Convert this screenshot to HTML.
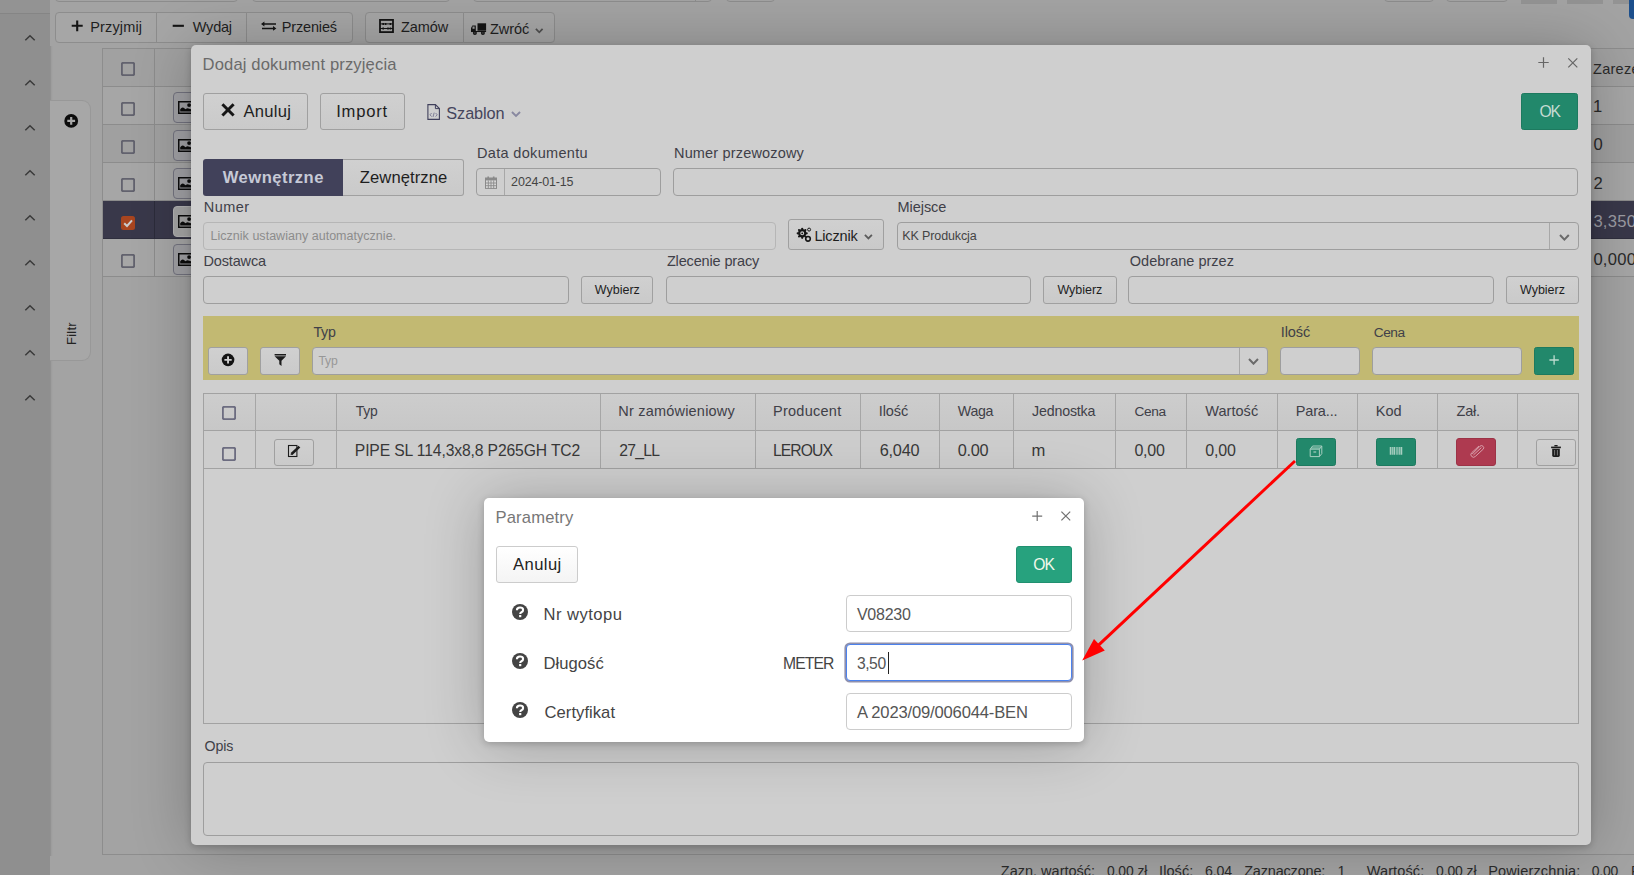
<!DOCTYPE html>
<html lang="pl"><head><meta charset="utf-8"><title>Dodaj dokument przyjęcia</title>
<style>
html,body{margin:0;padding:0}
body{width:1634px;height:875px;overflow:hidden;position:relative;background:#a3a3a3;font-family:"Liberation Sans",sans-serif}
#root{position:absolute;left:0;top:0;width:1634px;height:875px;overflow:hidden}
#root div,#root svg.a{position:absolute}
.t{position:absolute;white-space:nowrap;line-height:20px}
</style></head>
<body><div id="root">
<div style="left:0px;top:0px;width:50px;height:875px;background:#8f8f8f;"></div>
<div style="left:0px;top:0px;width:50px;height:13px;background:#939393;border-bottom:1px solid #858585;"></div>
<div style="left:49.5px;top:46px;width:1.0px;height:810px;background:rgba(0,0,0,.10);"></div>
<div style="left:50.5px;top:46px;width:2.5px;height:810px;background:linear-gradient(90deg,rgba(0,0,0,.05),rgba(0,0,0,0));"></div>
<svg class="a" style="left:24px;top:33.5px" width="12" height="8" viewBox="0 0 12 8"><path d="M1.3 6.3 L6 1.7 L10.7 6.3" fill="none" stroke="#3a3a3a" stroke-width="1.5"/></svg>
<svg class="a" style="left:24px;top:78.5px" width="12" height="8" viewBox="0 0 12 8"><path d="M1.3 6.3 L6 1.7 L10.7 6.3" fill="none" stroke="#3a3a3a" stroke-width="1.5"/></svg>
<svg class="a" style="left:24px;top:123.5px" width="12" height="8" viewBox="0 0 12 8"><path d="M1.3 6.3 L6 1.7 L10.7 6.3" fill="none" stroke="#3a3a3a" stroke-width="1.5"/></svg>
<svg class="a" style="left:24px;top:168.5px" width="12" height="8" viewBox="0 0 12 8"><path d="M1.3 6.3 L6 1.7 L10.7 6.3" fill="none" stroke="#3a3a3a" stroke-width="1.5"/></svg>
<svg class="a" style="left:24px;top:213.5px" width="12" height="8" viewBox="0 0 12 8"><path d="M1.3 6.3 L6 1.7 L10.7 6.3" fill="none" stroke="#3a3a3a" stroke-width="1.5"/></svg>
<svg class="a" style="left:24px;top:258.5px" width="12" height="8" viewBox="0 0 12 8"><path d="M1.3 6.3 L6 1.7 L10.7 6.3" fill="none" stroke="#3a3a3a" stroke-width="1.5"/></svg>
<svg class="a" style="left:24px;top:303.5px" width="12" height="8" viewBox="0 0 12 8"><path d="M1.3 6.3 L6 1.7 L10.7 6.3" fill="none" stroke="#3a3a3a" stroke-width="1.5"/></svg>
<svg class="a" style="left:24px;top:348.5px" width="12" height="8" viewBox="0 0 12 8"><path d="M1.3 6.3 L6 1.7 L10.7 6.3" fill="none" stroke="#3a3a3a" stroke-width="1.5"/></svg>
<svg class="a" style="left:24px;top:393.5px" width="12" height="8" viewBox="0 0 12 8"><path d="M1.3 6.3 L6 1.7 L10.7 6.3" fill="none" stroke="#3a3a3a" stroke-width="1.5"/></svg>
<div style="left:55px;top:-30px;width:183px;height:32px;border:1px solid #8c8c8c;border-radius:4px;box-sizing:border-box;"></div>
<div style="left:252px;top:-30px;width:198px;height:32px;border:1px solid #8c8c8c;border-radius:4px;box-sizing:border-box;"></div>
<div style="left:473px;top:-30px;width:239px;height:32px;border:1px solid #8c8c8c;border-radius:4px;box-sizing:border-box;"></div>
<div style="left:726px;top:-30px;width:49px;height:32px;border:1px solid #8c8c8c;border-radius:4px;box-sizing:border-box;"></div>
<div style="left:1384px;top:-30px;width:50px;height:32px;border:1px solid #8c8c8c;border-radius:4px;box-sizing:border-box;"></div>
<div style="left:1446px;top:-30px;width:62px;height:32px;border:1px solid #8c8c8c;border-radius:4px;box-sizing:border-box;"></div>
<div style="left:695px;top:-5px;width:1px;height:6px;background:#8c8c8c;"></div>
<div style="left:1521px;top:0px;width:36px;height:3.5px;background:#939393;"></div>
<div style="left:1567px;top:0px;width:36px;height:3.5px;background:#939393;"></div>
<div style="left:1613px;top:0px;width:21px;height:3.5px;background:#939393;"></div>
<div style="left:1629px;top:-5px;width:11px;height:23.5px;background:#1c4f8c;border-radius:0 0 0 4px;"></div>
<div style="left:55px;top:12px;width:102px;height:30.5px;background:#a6a6a6;border:1px solid #8d8d8d;border-radius:4px 0 0 4px;box-sizing:border-box;"></div>
<div style="left:156px;top:12px;width:91px;height:30.5px;background:#a6a6a6;border:1px solid #8d8d8d;border-radius:0;box-sizing:border-box;"></div>
<div style="left:246px;top:12px;width:106.5px;height:30.5px;background:#a6a6a6;border:1px solid #8d8d8d;border-radius:0 4px 4px 0;box-sizing:border-box;"></div>
<div style="left:365px;top:12px;width:99px;height:30.5px;background:#a6a6a6;border:1px solid #8d8d8d;border-radius:4px 0 0 4px;box-sizing:border-box;"></div>
<div style="left:463px;top:12px;width:91.5px;height:30.5px;background:#a6a6a6;border:1px solid #8d8d8d;border-radius:0 4px 4px 0;box-sizing:border-box;"></div>
<span class="t" style="left:90.30px;top:17px;line-height:20px;font-size:14.5px;letter-spacing:0.140px;color:#1f1f1f;">Przyjmij</span>
<span class="t" style="left:192.80px;top:17px;line-height:20px;font-size:14.5px;letter-spacing:-0.234px;color:#1f1f1f;">Wydaj</span>
<span class="t" style="left:281.80px;top:17px;line-height:20px;font-size:14.5px;letter-spacing:-0.166px;color:#1f1f1f;">Przenieś</span>
<span class="t" style="left:401.00px;top:17px;line-height:20px;font-size:14.5px;letter-spacing:-0.066px;color:#1f1f1f;">Zamów</span>
<span class="t" style="left:489.90px;top:19px;line-height:20px;font-size:14.5px;letter-spacing:-0.030px;color:#1f1f1f;">Zwróć</span>
<svg class="a" style="left:70px;top:19px" width="14" height="14" viewBox="0 0 14 14"><path d="M7.2 1.4 V12.2 M1.7 6.8 H12.7" stroke="#141414" stroke-width="2.1" fill="none"/></svg>
<svg class="a" style="left:171px;top:19px" width="14" height="14" viewBox="0 0 14 14"><path d="M1.7 6.8 H12.9" stroke="#141414" stroke-width="2.1" fill="none"/></svg>
<svg class="a" style="left:260px;top:19px" width="18" height="14" viewBox="0 0 18 14"><path d="M3 5 H16 M2 9.4 H14.6" stroke="#141414" stroke-width="1.5" fill="none"/><path d="M1 5 L4.4 2.6 V7.4 Z M16.4 9.4 L13 7 V11.8 Z" fill="#141414"/></svg>
<svg class="a" style="left:379px;top:19px" width="15" height="14" viewBox="0 0 15 14"><rect x="1" y="0.9" width="13" height="12.2" fill="none" stroke="#141414" stroke-width="1.8"/><path d="M1 4.9 H14 M1 9.5 H14" stroke="#141414" stroke-width="1"/><path d="M3.4 3.9 h1.6 v2 h-1.6z M5.8 3.9 h1.6 v2 h-1.6z M10.6 3.9 h1.6 v2 h-1.6z M3.4 8.5 h1.6 v2 h-1.6z M8.2 8.5 h1.6 v2 h-1.6z M10.6 8.5 h1.6 v2 h-1.6z" fill="#141414"/></svg>
<svg class="a" style="left:470px;top:22px" width="18" height="14" viewBox="0 0 18 14"><rect x="7.5" y="1.3" width="8.6" height="7.4" fill="#141414"/><path d="M1 9 V6 L2.4 3.6 H5.8 V9 Z" fill="#141414"/><rect x="2.5" y="4.5" width="2.1" height="2.3" fill="#9c9c9c"/><path d="M1 9.5 H16.1" stroke="#141414" stroke-width="1.1"/><circle cx="4.9" cy="10.9" r="2" fill="#141414"/><circle cx="12.9" cy="10.9" r="2" fill="#141414"/><circle cx="4.9" cy="10.9" r="0.7" fill="#666"/><circle cx="12.9" cy="10.9" r="0.7" fill="#666"/></svg>
<svg class="a" style="left:533.7px;top:26.6px" width="10.5" height="7.199999999999996" viewBox="0 0 10.5 7.199999999999996"><path d="M1.90 1.90 L5.25 5.30 L8.60 1.90" fill="none" stroke="#505050" stroke-width="1.8"/></svg>
<div style="left:50px;top:99.5px;width:40.5px;height:261.0px;background:#a7a7a7;border:1px solid #989898;border-left:none;border-radius:0 9px 9px 0;box-sizing:border-box;"></div>
<div class="a" style="left:62px;top:323px;width:20px;height:22px;"><span class="t" style="left:3px;top:22px;transform-origin:0 0;transform:rotate(-90deg);font-size:13px;letter-spacing:.25px;color:#222;line-height:14px">Filtr</span></div>
<svg class="a" style="left:63px;top:113px" width="16" height="16" viewBox="0 0 16 16"><circle cx="8.2" cy="7.9" r="6.9" fill="#0c0c0c"/><path d="M8.2 4 V11.8 M4.3 7.9 H12.1" stroke="#a7a7a7" stroke-width="2.2"/></svg>
<div style="left:102px;top:48px;width:1598px;height:807px;border:1px solid #8d8d8d;box-sizing:border-box;"></div>
<div style="left:103px;top:49px;width:1597px;height:38px;background:#a1a1a1;border-bottom:1px solid #8c8c8c;box-sizing:border-box;"></div>
<div style="left:103px;top:87px;width:1597px;height:37.5px;background:#a6a6a6;border-bottom:1px solid #8c8c8c;box-sizing:border-box;"></div>
<div style="left:103px;top:124.5px;width:1597px;height:38.0px;background:#a0a0a0;border-bottom:1px solid #8c8c8c;box-sizing:border-box;"></div>
<div style="left:103px;top:162.5px;width:1597px;height:38.5px;background:#a6a6a6;border-bottom:1px solid #8c8c8c;box-sizing:border-box;"></div>
<div style="left:103px;top:201px;width:1597px;height:38px;background:#39384a;border-bottom:1px solid #2f2f3e;box-sizing:border-box;"></div>
<div style="left:103px;top:239px;width:1597px;height:37.5px;background:#a6a6a6;border-bottom:1px solid #8c8c8c;box-sizing:border-box;"></div>
<div style="left:154px;top:49px;width:1px;height:227.5px;background:#8c8c8c;"></div>
<div style="left:154px;top:201px;width:1px;height:38px;background:#2c2c3a;"></div>
<svg class="a" style="left:121px;top:62px" width="14" height="14" viewBox="0 0 14 14"><rect x="0.8" y="0.8" width="12.4" height="12.4" rx="1.8" fill="none" stroke="#62626e" stroke-width="2"/></svg>
<svg class="a" style="left:121px;top:102px" width="14" height="14" viewBox="0 0 14 14"><rect x="0.8" y="0.8" width="12.4" height="12.4" rx="1.8" fill="none" stroke="#62626e" stroke-width="2"/></svg>
<svg class="a" style="left:121px;top:140px" width="14" height="14" viewBox="0 0 14 14"><rect x="0.8" y="0.8" width="12.4" height="12.4" rx="1.8" fill="none" stroke="#62626e" stroke-width="2"/></svg>
<svg class="a" style="left:121px;top:178px" width="14" height="14" viewBox="0 0 14 14"><rect x="0.8" y="0.8" width="12.4" height="12.4" rx="1.8" fill="none" stroke="#62626e" stroke-width="2"/></svg>
<svg class="a" style="left:121px;top:254px" width="14" height="14" viewBox="0 0 14 14"><rect x="0.8" y="0.8" width="12.4" height="12.4" rx="1.8" fill="none" stroke="#62626e" stroke-width="2"/></svg>
<div style="left:121px;top:216px;width:14px;height:14px;background:#a8451f;border-radius:2.5px;"></div>
<svg class="a" style="left:121px;top:216px" width="14" height="14" viewBox="0 0 14 14"><path d="M3.2 7.2 L6 10 L11 4.4" fill="none" stroke="#cbcbcb" stroke-width="2"/></svg>
<div style="left:173px;top:92px;width:42px;height:31px;background:#a1a1a5;border:1px solid #73737f;border-radius:4px;box-sizing:border-box;"></div>
<svg class="a" style="left:178px;top:101px" width="16" height="13" viewBox="0 0 16 13"><rect x="0.75" y="0.75" width="14.5" height="11.5" fill="none" stroke="#0c0c0c" stroke-width="1.5"/><circle cx="11.1" cy="4.1" r="1.9" fill="#0c0c0c"/><path d="M2.2 10.6 L2.2 8.2 Q4.4 5 6.6 7.6 L7.6 8.2 Q9 7 10.4 7.4 L13.8 8.6 L13.8 10.6 Z" fill="#0c0c0c"/></svg>
<div style="left:173px;top:130px;width:42px;height:31px;background:#a1a1a5;border:1px solid #73737f;border-radius:4px;box-sizing:border-box;"></div>
<svg class="a" style="left:178px;top:139px" width="16" height="13" viewBox="0 0 16 13"><rect x="0.75" y="0.75" width="14.5" height="11.5" fill="none" stroke="#0c0c0c" stroke-width="1.5"/><circle cx="11.1" cy="4.1" r="1.9" fill="#0c0c0c"/><path d="M2.2 10.6 L2.2 8.2 Q4.4 5 6.6 7.6 L7.6 8.2 Q9 7 10.4 7.4 L13.8 8.6 L13.8 10.6 Z" fill="#0c0c0c"/></svg>
<div style="left:173px;top:168px;width:42px;height:31px;background:#a1a1a5;border:1px solid #73737f;border-radius:4px;box-sizing:border-box;"></div>
<svg class="a" style="left:178px;top:177px" width="16" height="13" viewBox="0 0 16 13"><rect x="0.75" y="0.75" width="14.5" height="11.5" fill="none" stroke="#0c0c0c" stroke-width="1.5"/><circle cx="11.1" cy="4.1" r="1.9" fill="#0c0c0c"/><path d="M2.2 10.6 L2.2 8.2 Q4.4 5 6.6 7.6 L7.6 8.2 Q9 7 10.4 7.4 L13.8 8.6 L13.8 10.6 Z" fill="#0c0c0c"/></svg>
<div style="left:173px;top:206px;width:42px;height:31px;background:#a6a6a6;border:1px solid #b4b4b4;border-radius:4px;box-sizing:border-box;"></div>
<svg class="a" style="left:178px;top:215px" width="16" height="13" viewBox="0 0 16 13"><rect x="0.75" y="0.75" width="14.5" height="11.5" fill="none" stroke="#0c0c0c" stroke-width="1.5"/><circle cx="11.1" cy="4.1" r="1.9" fill="#0c0c0c"/><path d="M2.2 10.6 L2.2 8.2 Q4.4 5 6.6 7.6 L7.6 8.2 Q9 7 10.4 7.4 L13.8 8.6 L13.8 10.6 Z" fill="#0c0c0c"/></svg>
<div style="left:173px;top:244px;width:42px;height:31px;background:#a1a1a5;border:1px solid #73737f;border-radius:4px;box-sizing:border-box;"></div>
<svg class="a" style="left:178px;top:253px" width="16" height="13" viewBox="0 0 16 13"><rect x="0.75" y="0.75" width="14.5" height="11.5" fill="none" stroke="#0c0c0c" stroke-width="1.5"/><circle cx="11.1" cy="4.1" r="1.9" fill="#0c0c0c"/><path d="M2.2 10.6 L2.2 8.2 Q4.4 5 6.6 7.6 L7.6 8.2 Q9 7 10.4 7.4 L13.8 8.6 L13.8 10.6 Z" fill="#0c0c0c"/></svg>
<span class="t" style="left:1593.10px;top:59px;line-height:20px;font-size:14.5px;letter-spacing:0.250px;color:#2a2a2a;">Zareze</span>
<span class="t" style="left:1593.00px;top:95px;line-height:23px;font-size:16.6px;letter-spacing:0.250px;color:#2a2a2a;">1</span>
<span class="t" style="left:1593.40px;top:133px;line-height:23px;font-size:16.6px;letter-spacing:0.250px;color:#2a2a2a;">0</span>
<span class="t" style="left:1593.40px;top:172px;line-height:23px;font-size:16.6px;letter-spacing:0.250px;color:#2a2a2a;">2</span>
<span class="t" style="left:1593.40px;top:210px;line-height:23px;font-size:16.6px;letter-spacing:0.250px;color:#9c9ca4;">3,350</span>
<span class="t" style="left:1593.40px;top:248px;line-height:23px;font-size:16.6px;letter-spacing:0.250px;color:#2a2a2a;">0,000</span>
<span class="t" style="left:1000.80px;top:861px;line-height:20px;font-size:14.5px;letter-spacing:0.004px;color:#2b2b2b;">Zazn. wartość:</span>
<span class="t" style="left:1106.90px;top:861px;line-height:20px;font-size:13.9px;letter-spacing:-0.073px;color:#2b2b2b;">0,00 zł</span>
<span class="t" style="left:1159.10px;top:861px;line-height:20px;font-size:14.5px;letter-spacing:0.057px;color:#2b2b2b;">Ilość:</span>
<span class="t" style="left:1205.00px;top:861px;line-height:20px;font-size:14.2px;letter-spacing:-0.174px;color:#2b2b2b;">6,04</span>
<span class="t" style="left:1244.20px;top:861px;line-height:20px;font-size:14.5px;letter-spacing:-0.189px;color:#2b2b2b;">Zaznaczone:</span>
<span class="t" style="left:1337.50px;top:861px;line-height:20px;font-size:14.5px;letter-spacing:0.250px;color:#2b2b2b;">1</span>
<span class="t" style="left:1366.70px;top:861px;line-height:20px;font-size:14.5px;letter-spacing:0.124px;color:#2b2b2b;">Wartość:</span>
<span class="t" style="left:1436.00px;top:861px;line-height:20px;font-size:13.9px;letter-spacing:-0.073px;color:#2b2b2b;">0,00 zł</span>
<span class="t" style="left:1488.20px;top:861px;line-height:20px;font-size:14.5px;letter-spacing:0.155px;color:#2b2b2b;">Powierzchnia:</span>
<span class="t" style="left:1591.70px;top:861px;line-height:20px;font-size:13.9px;letter-spacing:-0.170px;color:#2b2b2b;">0,00</span>
<span class="t" style="left:1631.00px;top:861px;line-height:20px;font-size:14.5px;letter-spacing:0.250px;color:#2b2b2b;">P</span>
<div style="left:191px;top:45px;width:1400px;height:800px;background:#cfcfcf;border-radius:5px;box-shadow:0 2px 7px rgba(0,0,0,.2),0 2px 60px rgba(0,0,0,.24);"></div>
<span class="t" style="left:202.60px;top:53px;line-height:23px;font-size:16.6px;letter-spacing:0.126px;color:#6a6a6a;">Dodaj dokument przyjęcia</span>
<div style="left:203px;top:93px;width:105px;height:37px;background:linear-gradient(#d0d0d0,#cacaca);border:1px solid #a0a0a0;border-radius:3px;box-sizing:border-box;"></div>
<div style="left:320px;top:93px;width:85px;height:37px;background:linear-gradient(#d0d0d0,#cacaca);border:1px solid #a0a0a0;border-radius:3px;box-sizing:border-box;"></div>
<span class="t" style="left:243.40px;top:100px;line-height:23px;font-size:16.6px;letter-spacing:0.292px;color:#1e1e1e;">Anuluj</span>
<span class="t" style="left:336.20px;top:100px;line-height:23px;font-size:16.6px;letter-spacing:0.777px;color:#1e1e1e;">Import</span>
<span class="t" style="left:446.30px;top:102px;line-height:22px;font-size:16.3px;letter-spacing:-0.080px;color:#45455c;">Szablon</span>
<div style="left:1521px;top:93px;width:57px;height:37px;background:#22886b;border:1px solid #1d7a5f;border-radius:2.5px;box-sizing:border-box;"></div>
<span class="t" style="left:1539.40px;top:101px;line-height:21px;font-size:15.7px;letter-spacing:-1.000px;color:#c4dbd2;">OK</span>
<div style="left:203px;top:159px;width:140px;height:37px;background:#41415a;border-radius:3px 0 0 3px;"></div>
<div style="left:343px;top:159px;width:121px;height:37px;background:linear-gradient(#d0d0d0,#cacaca);border:1px solid #a0a0a0;border-left:none;border-radius:0 3px 3px 0;box-sizing:border-box;"></div>
<span class="t" style="left:222.80px;top:166px;line-height:23px;font-size:16.6px;letter-spacing:0.458px;color:#c6c9d6;font-weight:bold;">Wewnętrzne</span>
<span class="t" style="left:359.80px;top:166px;line-height:23px;font-size:16.6px;letter-spacing:0.081px;color:#1e1e1e;">Zewnętrzne</span>
<span class="t" style="left:477.00px;top:143px;line-height:20px;font-size:14.5px;letter-spacing:0.328px;color:#404048;">Data dokumentu</span>
<div style="left:476px;top:168px;width:185px;height:28px;background:#cfcfcf;border:1px solid #9e9e9e;border-radius:4px;box-sizing:border-box;"></div>
<div style="left:504px;top:169px;width:1px;height:26px;background:#a8a8a8;"></div>
<span class="t" style="left:511.10px;top:173px;line-height:18px;font-size:12.5px;letter-spacing:-0.165px;color:#444;">2024-01-15</span>
<span class="t" style="left:674.00px;top:143px;line-height:20px;font-size:14.5px;letter-spacing:0.169px;color:#404048;">Numer przewozowy</span>
<div style="left:673px;top:168px;width:905px;height:28px;background:#cfcfcf;border:1px solid #9e9e9e;border-radius:4px;box-sizing:border-box;"></div>
<span class="t" style="left:203.70px;top:197px;line-height:20px;font-size:14.5px;letter-spacing:0.480px;color:#404048;">Numer</span>
<div style="left:203px;top:222px;width:573px;height:28px;background:#d0d0d0;border:1px solid #b6b6b6;border-radius:4px;box-sizing:border-box;"></div>
<span class="t" style="left:210.50px;top:227px;line-height:18px;font-size:12.5px;letter-spacing:0.025px;color:#8c8c8c;">Licznik ustawiany automatycznie.</span>
<div style="left:788px;top:219px;width:96px;height:31px;background:linear-gradient(#d0d0d0,#cacaca);border:1px solid #a0a0a0;border-radius:3px;box-sizing:border-box;"></div>
<span class="t" style="left:814.40px;top:226px;line-height:20px;font-size:14.5px;letter-spacing:-0.162px;color:#1e1e1e;">Licznik</span>
<span class="t" style="left:897.60px;top:197px;line-height:20px;font-size:14.5px;letter-spacing:-0.064px;color:#404048;">Miejsce</span>
<div style="left:897px;top:222px;width:682px;height:28px;background:#cfcfcf;border:1px solid #9e9e9e;border-radius:4px;box-sizing:border-box;"></div>
<div style="left:1549px;top:223px;width:1px;height:26px;background:#a8a8a8;"></div>
<span class="t" style="left:902.30px;top:227px;line-height:18px;font-size:12.5px;letter-spacing:-0.126px;color:#444;">KK Produkcja</span>
<span class="t" style="left:203.50px;top:251px;line-height:20px;font-size:14.5px;letter-spacing:-0.157px;color:#404048;">Dostawca</span>
<div style="left:203px;top:276px;width:366px;height:28px;background:#cfcfcf;border:1px solid #9e9e9e;border-radius:4px;box-sizing:border-box;"></div>
<span class="t" style="left:666.90px;top:251px;line-height:20px;font-size:14.5px;letter-spacing:-0.149px;color:#404048;">Zlecenie pracy</span>
<div style="left:666px;top:276px;width:365px;height:28px;background:#cfcfcf;border:1px solid #9e9e9e;border-radius:4px;box-sizing:border-box;"></div>
<span class="t" style="left:1129.80px;top:251px;line-height:20px;font-size:14.5px;letter-spacing:0.013px;color:#404048;">Odebrane przez</span>
<div style="left:1128px;top:276px;width:366px;height:28px;background:#cfcfcf;border:1px solid #9e9e9e;border-radius:4px;box-sizing:border-box;"></div>
<div style="left:581px;top:276px;width:72px;height:28px;background:linear-gradient(#d0d0d0,#cacaca);border:1px solid #a0a0a0;border-radius:3px;box-sizing:border-box;"></div>
<span class="t" style="left:594.85px;top:281px;line-height:18px;font-size:12.5px;letter-spacing:-0.014px;color:#1e1e1e;">Wybierz</span>
<div style="left:1043px;top:276px;width:73.5px;height:28px;background:linear-gradient(#d0d0d0,#cacaca);border:1px solid #a0a0a0;border-radius:3px;box-sizing:border-box;"></div>
<span class="t" style="left:1057.40px;top:281px;line-height:18px;font-size:12.5px;letter-spacing:-0.014px;color:#1e1e1e;">Wybierz</span>
<div style="left:1506px;top:276px;width:73px;height:28px;background:linear-gradient(#d0d0d0,#cacaca);border:1px solid #a0a0a0;border-radius:3px;box-sizing:border-box;"></div>
<span class="t" style="left:1520.00px;top:281px;line-height:18px;font-size:12.5px;letter-spacing:-0.014px;color:#1e1e1e;">Wybierz</span>
<div style="left:203px;top:316px;width:1376px;height:64px;background:#c2b972;"></div>
<span class="t" style="left:313.40px;top:322px;line-height:20px;font-size:14.2px;letter-spacing:-0.188px;color:#404048;">Typ</span>
<span class="t" style="left:1280.70px;top:322px;line-height:20px;font-size:14.5px;letter-spacing:-0.066px;color:#404048;">Ilość</span>
<span class="t" style="left:1373.80px;top:323px;line-height:19px;font-size:13.7px;letter-spacing:-0.470px;color:#404048;">Cena</span>
<div style="left:208px;top:347px;width:40px;height:27.5px;background:linear-gradient(#d0d0d0,#cacaca);border:1px solid #a0a0a0;border-radius:3px;box-sizing:border-box;"></div>
<div style="left:260px;top:347px;width:40px;height:27.5px;background:linear-gradient(#d0d0d0,#cacaca);border:1px solid #a0a0a0;border-radius:3px;box-sizing:border-box;"></div>
<div style="left:312px;top:347px;width:956px;height:27.5px;background:#cfcfcf;border:1px solid #9e9e9e;border-radius:4px;box-sizing:border-box;"></div>
<div style="left:1239px;top:348px;width:1px;height:25.5px;background:#a8a8a8;"></div>
<span class="t" style="left:318.40px;top:352px;line-height:18px;font-size:12.2px;letter-spacing:-0.183px;color:#979797;">Typ</span>
<div style="left:1280px;top:347px;width:80px;height:27.5px;background:#cfcfcf;border:1px solid #9e9e9e;border-radius:4px;box-sizing:border-box;"></div>
<div style="left:1372px;top:347px;width:150px;height:27.5px;background:#cfcfcf;border:1px solid #9e9e9e;border-radius:4px;box-sizing:border-box;"></div>
<div style="left:1534px;top:347px;width:40px;height:28px;background:#22886b;border:1px solid #1d7a5f;border-radius:2.5px;box-sizing:border-box;"></div>
<div style="left:203px;top:392.5px;width:1376px;height:331.0px;border:1px solid #a2a2a2;box-sizing:border-box;"></div>
<div style="left:204px;top:393.5px;width:1374px;height:37.0px;background:linear-gradient(#cdcdcd,#c7c7c7);border-bottom:1px solid #a2a2a2;box-sizing:border-box;"></div>
<div style="left:204px;top:430.5px;width:1374px;height:38.0px;background:#cdcdcd;border-bottom:1px solid #a2a2a2;box-sizing:border-box;"></div>
<div style="left:255.0px;top:393.5px;width:1.0px;height:74.5px;background:#a6a6a6;"></div>
<div style="left:336.0px;top:393.5px;width:1.0px;height:74.5px;background:#a6a6a6;"></div>
<div style="left:600.0px;top:393.5px;width:1.0px;height:74.5px;background:#a6a6a6;"></div>
<div style="left:755.0px;top:393.5px;width:1.0px;height:74.5px;background:#a6a6a6;"></div>
<div style="left:860.0px;top:393.5px;width:1.0px;height:74.5px;background:#a6a6a6;"></div>
<div style="left:939.0px;top:393.5px;width:1.0px;height:74.5px;background:#a6a6a6;"></div>
<div style="left:1013.0px;top:393.5px;width:1.0px;height:74.5px;background:#a6a6a6;"></div>
<div style="left:1115.0px;top:393.5px;width:1.0px;height:74.5px;background:#a6a6a6;"></div>
<div style="left:1186.0px;top:393.5px;width:1.0px;height:74.5px;background:#a6a6a6;"></div>
<div style="left:1277.0px;top:393.5px;width:1.0px;height:74.5px;background:#a6a6a6;"></div>
<div style="left:1357.0px;top:393.5px;width:1.0px;height:74.5px;background:#a6a6a6;"></div>
<div style="left:1437.0px;top:393.5px;width:1.0px;height:74.5px;background:#a6a6a6;"></div>
<div style="left:1517.0px;top:393.5px;width:1.0px;height:74.5px;background:#a6a6a6;"></div>
<svg class="a" style="left:222px;top:406px" width="14" height="14" viewBox="0 0 14 14"><rect x="0.8" y="0.8" width="12.4" height="12.4" rx="1.8" fill="none" stroke="#6c6c80" stroke-width="2"/></svg>
<svg class="a" style="left:222px;top:446.5px" width="14" height="14" viewBox="0 0 14 14"><rect x="0.8" y="0.8" width="12.4" height="12.4" rx="1.8" fill="none" stroke="#6c6c80" stroke-width="2"/></svg>
<div style="left:274px;top:438.5px;width:40px;height:27.0px;background:linear-gradient(#d0d0d0,#cacaca);border:1px solid #a0a0a0;border-radius:3px;box-sizing:border-box;"></div>
<span class="t" style="left:355.80px;top:401px;line-height:20px;font-size:13.9px;letter-spacing:-0.232px;color:#404048;">Typ</span>
<span class="t" style="left:618.30px;top:401px;line-height:20px;font-size:14.5px;letter-spacing:0.203px;color:#404048;">Nr zamówieniowy</span>
<span class="t" style="left:773.00px;top:401px;line-height:20px;font-size:14.5px;letter-spacing:0.266px;color:#404048;">Producent</span>
<span class="t" style="left:878.70px;top:401px;line-height:20px;font-size:14.5px;letter-spacing:-0.066px;color:#404048;">Ilość</span>
<span class="t" style="left:957.80px;top:401px;line-height:20px;font-size:14.2px;letter-spacing:-0.282px;color:#404048;">Waga</span>
<span class="t" style="left:1032.10px;top:401px;line-height:20px;font-size:14.2px;letter-spacing:-0.173px;color:#404048;">Jednostka</span>
<span class="t" style="left:1134.40px;top:402px;line-height:19px;font-size:13.7px;letter-spacing:-0.370px;color:#404048;">Cena</span>
<span class="t" style="left:1205.30px;top:401px;line-height:20px;font-size:14.5px;letter-spacing:0.036px;color:#404048;">Wartość</span>
<span class="t" style="left:1295.80px;top:401px;line-height:20px;font-size:14.5px;letter-spacing:-0.164px;color:#404048;">Para...</span>
<span class="t" style="left:1375.80px;top:401px;line-height:20px;font-size:14.5px;letter-spacing:-0.018px;color:#404048;">Kod</span>
<span class="t" style="left:1456.50px;top:401px;line-height:20px;font-size:14.5px;letter-spacing:-0.181px;color:#404048;">Zał.</span>
<span class="t" style="left:354.80px;top:440px;line-height:21px;font-size:15.7px;letter-spacing:-0.133px;color:#383838;">PIPE SL 114,3x8,8 P265GH TC2</span>
<span class="t" style="left:619.30px;top:440px;line-height:21px;font-size:15.7px;letter-spacing:-0.725px;color:#383838;">27_LL</span>
<span class="t" style="left:773.00px;top:440px;line-height:21px;font-size:15.7px;letter-spacing:-0.910px;color:#383838;">LEROUX</span>
<span class="t" style="left:879.70px;top:439px;line-height:22px;font-size:16.3px;letter-spacing:-0.197px;color:#383838;">6,040</span>
<span class="t" style="left:957.80px;top:439px;line-height:22px;font-size:16.3px;letter-spacing:-0.278px;color:#383838;">0.00</span>
<span class="t" style="left:1031.50px;top:439px;line-height:23px;font-size:16.6px;letter-spacing:0.250px;color:#383838;">m</span>
<span class="t" style="left:1134.40px;top:440px;line-height:21px;font-size:16.0px;letter-spacing:-0.214px;color:#383838;">0,00</span>
<span class="t" style="left:1205.30px;top:440px;line-height:21px;font-size:16.0px;letter-spacing:-0.214px;color:#383838;">0,00</span>
<div style="left:1296px;top:438px;width:40px;height:28px;background:#22886b;border:1px solid #1d7a5f;border-radius:2.5px;box-sizing:border-box;"></div>
<div style="left:1376px;top:438px;width:40px;height:28px;background:#22886b;border:1px solid #1d7a5f;border-radius:2.5px;box-sizing:border-box;"></div>
<div style="left:1456px;top:438px;width:40px;height:28px;background:#ae3a50;border:1px solid #9c3347;border-radius:3px;box-sizing:border-box;"></div>
<div style="left:1536px;top:438.5px;width:40px;height:27.0px;background:linear-gradient(#d0d0d0,#cacaca);border:1px solid #a0a0a0;border-radius:3px;box-sizing:border-box;"></div>
<span class="t" style="left:204.60px;top:736px;line-height:20px;font-size:14.2px;letter-spacing:-0.159px;color:#404048;">Opis</span>
<div style="left:203px;top:762px;width:1376px;height:74px;background:#cfcfcf;border:1px solid #9e9e9e;border-radius:4px;box-sizing:border-box;"></div>
<svg class="a" style="left:1537px;top:56px" width="13" height="13" viewBox="0 0 13 13"><path d="M6.5 1.3 V11.7 M1.3 6.5 H11.7" stroke="#666" stroke-width="1.2"/></svg>
<svg class="a" style="left:1567px;top:57px" width="12" height="12" viewBox="0 0 12 12"><path d="M1.3 1.3 L10.3 10.3 M10.3 1.3 L1.3 10.3" stroke="#666" stroke-width="1.2"/></svg>
<svg class="a" style="left:220px;top:102px" width="16" height="16" viewBox="0 0 16 16"><path d="M2.4 2.3 L13.6 13.5 M13.6 2.3 L2.4 13.5" stroke="#161616" stroke-width="3"/></svg>
<svg class="a" style="left:427px;top:104px" width="14" height="17" viewBox="0 0 14 17"><path d="M0.9 0.6 H8.4 L12.4 4.6 V15.4 H0.9 Z" fill="none" stroke="#40405c" stroke-width="1.1"/><path d="M8.4 0.6 V4.6 H12.4" fill="none" stroke="#40405c" stroke-width="1"/><path d="M4.6 9 L3 10.8 L4.6 12.6 M8.6 9 L10.2 10.8 L8.6 12.6 M7.2 8.6 L6 13" fill="none" stroke="#6a6a88" stroke-width="0.8"/></svg>
<svg class="a" style="left:509.6px;top:110.2px" width="12.0" height="7.799999999999997" viewBox="0 0 12.0 7.799999999999997"><path d="M1.95 1.95 L6.00 5.85 L10.05 1.95" fill="none" stroke="#8888a0" stroke-width="1.9"/></svg>
<svg class="a" style="left:485px;top:175.5px" width="12" height="13" viewBox="0 0 12 13"><rect x="0.5" y="2" width="11" height="10.4" fill="#d8d8d8" stroke="#8a8a8a" stroke-width="1"/><rect x="0.5" y="2" width="11" height="2.4" fill="#8a8a8a"/><path d="M3.3 4.4 V12.4 M6 4.4 V12.4 M8.7 4.4 V12.4 M0.5 7 H11.5 M0.5 9.7 H11.5" stroke="#8a8a8a" stroke-width="0.9"/><path d="M3.2 0.6 V3 M8.7 0.6 V3" stroke="#8a8a8a" stroke-width="1.6"/></svg>
<svg class="a" style="left:796px;top:226px" width="16" height="17" viewBox="0 0 16 17"><circle cx="6.2" cy="7.3" r="3.1" fill="none" stroke="#161616" stroke-width="2.2"/><circle cx="10.70" cy="7.30" r="1.1" fill="#161616"/><circle cx="9.38" cy="10.48" r="1.1" fill="#161616"/><circle cx="6.20" cy="11.80" r="1.1" fill="#161616"/><circle cx="3.02" cy="10.48" r="1.1" fill="#161616"/><circle cx="1.70" cy="7.30" r="1.1" fill="#161616"/><circle cx="3.02" cy="4.12" r="1.1" fill="#161616"/><circle cx="6.20" cy="2.80" r="1.1" fill="#161616"/><circle cx="9.38" cy="4.12" r="1.1" fill="#161616"/><circle cx="6.2" cy="7.3" r="0.9" fill="#161616"/><circle cx="13.1" cy="3.6" r="1.5" fill="none" stroke="#161616" stroke-width="1"/><circle cx="12" cy="12.8" r="2.3" fill="none" stroke="#161616" stroke-width="1.6"/></svg>
<svg class="a" style="left:863px;top:232.6px" width="10.799999999999955" height="7.400000000000006" viewBox="0 0 10.799999999999955 7.400000000000006"><path d="M1.90 1.90 L5.40 5.50 L8.90 1.90" fill="none" stroke="#5c5c5c" stroke-width="1.8"/></svg>
<svg class="a" style="left:1557.8px;top:233px" width="12.799999999999955" height="8.599999999999994" viewBox="0 0 12.799999999999955 8.599999999999994"><path d="M2.00 2.00 L6.40 6.60 L10.80 2.00" fill="none" stroke="#6a6a6a" stroke-width="2"/></svg>
<svg class="a" style="left:1246.5px;top:356.5px" width="13.0" height="8.699999999999989" viewBox="0 0 13.0 8.699999999999989"><path d="M2.00 2.00 L6.50 6.70 L11.00 2.00" fill="none" stroke="#6a6a6a" stroke-width="2"/></svg>
<svg class="a" style="left:220px;top:352px" width="16" height="16" viewBox="0 0 16 16"><circle cx="8.05" cy="7.85" r="6.3" fill="#141414"/><path d="M8.05 4.2 V11.5 M4.4 7.85 H11.7" stroke="#cfcfcf" stroke-width="1.9"/></svg>
<svg class="a" style="left:274px;top:353px" width="13" height="14" viewBox="0 0 13 14"><rect x="0.6" y="1" width="11.4" height="1.5" fill="#1c1c1c"/><path d="M0.6 3.3 H12 L7.5 7.8 V12.9 L5.3 11.2 V7.8 Z" fill="#1c1c1c"/></svg>
<svg class="a" style="left:1548px;top:354px" width="12" height="12" viewBox="0 0 12 12"><path d="M6.1 1.3 V10.7 M1.4 6 H10.8" stroke="#bfdcd0" stroke-width="1.3"/></svg>
<svg class="a" style="left:287px;top:444px" width="15" height="14" viewBox="0 0 15 14"><rect x="1.5" y="1.5" width="8.4" height="11" fill="none" stroke="#1c1c1c" stroke-width="1.1"/><path d="M12.4 2.6 L4.6 10" stroke="#1c1c1c" stroke-width="2.6"/><path d="M3.6 11 L4 9 L5.8 10.6 Z" fill="#1c1c1c"/></svg>
<svg class="a" style="left:1309px;top:444px" width="15" height="14" viewBox="0 0 15 14"><path d="M1.2 5.2 H10.4 V12.6 H1.2 Z M1.2 5.2 L3.6 2 H12.8 L10.4 5.2 M12.8 2 V9.6 L10.4 12.6 M2.2 4 H11.2" fill="none" stroke="#a8cfc1" stroke-width="1"/><path d="M4.4 8 H7.2" stroke="#a8cfc1" stroke-width="1.2"/></svg>
<svg class="a" style="left:1389px;top:446px" width="15" height="10" viewBox="0 0 15 10"><path d="M1.4 1 V8.8 M3.2 1 V8.8 M5.6 1 V8.8 M8 1 V8.8 M10.2 1 V8.8 M12.6 1 V8.8" stroke="#a8cfc1" stroke-width="1.3"/><path d="M4.4 1 V8.8 M11.4 1 V8.8" stroke="#a8cfc1" stroke-width="0.6"/></svg>
<svg class="a" style="left:1469px;top:443px" width="16" height="15" viewBox="0 0 16 15"><path d="M3 11.2 L11 3.2 A2.2 2.2 0 0 1 14.2 6.2 L6.4 13.4 A2.6 2.6 0 0 1 2.6 9.8 L10 3" fill="none" stroke="#dcaab4" stroke-width="0.9"/><path d="M4.4 12 L12.4 4.6" stroke="#dcaab4" stroke-width="0.9"/></svg>
<svg class="a" style="left:1550px;top:444px" width="12" height="14" viewBox="0 0 12 14"><path d="M4.4 1 H7.6 V2.4 H4.4 Z" fill="#1c1c1c"/><path d="M1.1 2.6 H10.9 V4.2 H1.1 Z" fill="#1c1c1c"/><path d="M2.2 4.8 H9.8 V11.6 Q9.8 13 8.4 13 H3.6 Q2.2 13 2.2 11.6 Z" fill="#1c1c1c"/><path d="M4.6 6 V11.4 M7.4 6 V11.4" stroke="#777" stroke-width="1"/></svg>
<div style="left:484px;top:497.5px;width:600px;height:244.0px;background:#fff;border-radius:5px;box-shadow:0 2px 7px rgba(0,0,0,.2),0 2px 60px rgba(0,0,0,.24);"></div>
<span class="t" style="left:495.50px;top:506px;line-height:23px;font-size:16.6px;letter-spacing:0.158px;color:#777;">Parametry</span>
<div style="left:496px;top:546px;width:82px;height:37px;background:linear-gradient(#fff,#f4f4f4);border:1px solid #ccc;border-radius:3px;box-sizing:border-box;"></div>
<span class="t" style="left:513.00px;top:553px;line-height:23px;font-size:16.6px;letter-spacing:0.432px;color:#222;">Anuluj</span>
<div style="left:1016px;top:546px;width:56px;height:37px;background:#27a27e;border:1px solid #219070;border-radius:3px;box-sizing:border-box;"></div>
<span class="t" style="left:1033.30px;top:554px;line-height:21px;font-size:15.7px;letter-spacing:-1.000px;color:#f1f8ea;">OK</span>
<div style="left:846px;top:595px;width:226px;height:37px;background:#fff;border:1px solid #ccc;border-radius:4px;box-sizing:border-box;"></div>
<div style="left:846px;top:644px;width:226px;height:37px;background:#fff;border:1px solid #4b82ee;border-radius:4px;box-sizing:border-box;box-shadow:0 0 0 1.6px #8f90ad;"></div>
<div style="left:846px;top:693px;width:226px;height:37px;background:#fff;border:1px solid #ccc;border-radius:4px;box-sizing:border-box;"></div>
<span class="t" style="left:543.50px;top:603px;line-height:23px;font-size:16.6px;letter-spacing:0.467px;color:#444;">Nr wytopu</span>
<span class="t" style="left:856.90px;top:604px;line-height:21px;font-size:16.0px;letter-spacing:-0.233px;color:#555;">V08230</span>
<span class="t" style="left:543.50px;top:652px;line-height:23px;font-size:16.6px;letter-spacing:0.041px;color:#444;">Długość</span>
<span class="t" style="left:783.10px;top:653px;line-height:21px;font-size:15.7px;letter-spacing:-0.944px;color:#444;">METER</span>
<span class="t" style="left:856.90px;top:653px;line-height:21px;font-size:15.7px;letter-spacing:-0.436px;color:#555;">3,50</span>
<div style="left:888.3px;top:651.5px;width:1.1000000000000227px;height:22.0px;background:#222;"></div>
<span class="t" style="left:544.50px;top:701px;line-height:23px;font-size:16.6px;letter-spacing:0.048px;color:#444;">Certyfikat</span>
<span class="t" style="left:856.90px;top:701px;line-height:23px;font-size:16.6px;letter-spacing:-0.174px;color:#555;">A 2023/09/006044-BEN</span>
<svg class="a" style="left:1030.5px;top:509.5px" width="13" height="13" viewBox="0 0 13 13"><path d="M6.2 1.1 V11.1 M1.2 6.1 H11.2" stroke="#707070" stroke-width="1.2"/></svg>
<svg class="a" style="left:1059.5px;top:509.5px" width="12" height="12" viewBox="0 0 12 12"><path d="M1.4 1.6 L10.2 10.4 M10.2 1.6 L1.4 10.4" stroke="#707070" stroke-width="1.2"/></svg>
<svg class="a" style="left:511px;top:602.9px" width="18" height="18" viewBox="0 0 18 18"><circle cx="9" cy="9" r="8" fill="#444"/><path d="M5.9 7.2 Q5.9 4.5 9 4.5 Q12.1 4.5 12.1 6.9 Q12.1 8.4 10.4 9.2 Q9.2 9.8 9.2 11" fill="none" stroke="#fff" stroke-width="2.1"/><rect x="8.1" y="12" width="2.2" height="2.2" fill="#fff"/></svg>
<svg class="a" style="left:511px;top:652.4px" width="18" height="18" viewBox="0 0 18 18"><circle cx="9" cy="9" r="8" fill="#444"/><path d="M5.9 7.2 Q5.9 4.5 9 4.5 Q12.1 4.5 12.1 6.9 Q12.1 8.4 10.4 9.2 Q9.2 9.8 9.2 11" fill="none" stroke="#fff" stroke-width="2.1"/><rect x="8.1" y="12" width="2.2" height="2.2" fill="#fff"/></svg>
<svg class="a" style="left:511px;top:701.4px" width="18" height="18" viewBox="0 0 18 18"><circle cx="9" cy="9" r="8" fill="#444"/><path d="M5.9 7.2 Q5.9 4.5 9 4.5 Q12.1 4.5 12.1 6.9 Q12.1 8.4 10.4 9.2 Q9.2 9.8 9.2 11" fill="none" stroke="#fff" stroke-width="2.1"/><rect x="8.1" y="12" width="2.2" height="2.2" fill="#fff"/></svg>
<svg class="a" style="left:0;top:0" width="1634" height="875" viewBox="0 0 1634 875"><line x1="1295" y1="461" x2="1098" y2="645.6" stroke="#f00" stroke-width="3"/><polygon points="1082.2,660.6 1094,639 1104.8,650.4" fill="#f00"/></svg>
</div></body></html>
